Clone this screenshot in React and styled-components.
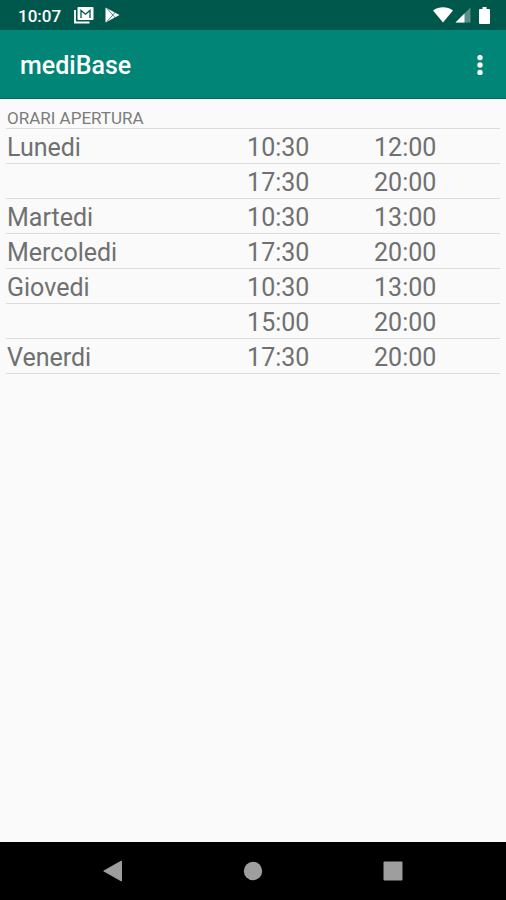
import React from "react";
import styled, { createGlobalStyle } from "styled-components";

const GlobalStyle = createGlobalStyle`
  * {
    box-sizing: border-box;
  }
  body {
    margin: 0;
    font-family: Roboto, "Noto Sans", sans-serif;
    background: #fafafa;
  }
`;

const Screen = styled.div`
  display: flex;
  flex-direction: column;
  min-height: 100vh;
`;
const StatusBar = styled.div`
  display: flex;
  align-items: center;
  justify-content: space-between;
  height: 30px;
  padding: 0 16px 0 18px;
  background: #00574b;
  color: #fff;
`;
const StatusGroup = styled.div`
  display: flex;
  align-items: center;
  gap: ${(props) => props.$gap};
`;
const Clock = styled.time`
  margin: 2px 2px 0 0;
  font-size: 17px;
  line-height: 30px;
  font-weight: 500;
`;
const BatterySlot = styled.div`
  display: flex;
  padding-left: 6px;
`;
const AppBar = styled.header`
  display: flex;
  align-items: center;
  justify-content: space-between;
  height: 69px;
  padding: 2px 11px 0 20px;
  background: #008577;
  color: #fff;
  border-bottom: 1px solid #00695e;
`;
const Title = styled.h1`
  margin: 2px 0 0;
  font-size: 25px;
  line-height: 32px;
  font-weight: 500;
`;
const IconButton = styled.button`
  display: flex;
  align-items: center;
  justify-content: center;
  width: ${(props) => props.$width};
  height: 40px;
  padding: 0;
  border: 0;
  background: none;
  color: inherit;
`;
const Content = styled.main`
  flex: 1;
  padding: 9px 6px;
`;
const Table = styled.table`
  width: 100%;
  table-layout: fixed;
  border-collapse: separate;
  border-spacing: 0;
  color: #707070;
`;
const Caption = styled.caption`
  height: 21px;
  padding-left: 1px;
  border-bottom: 1px solid #dcdcdc;
  font-size: 17px;
  line-height: 20px;
  text-align: left;
  color: #7c7c7c;
`;
const Column = styled.col`
  width: ${(props) => props.$width};
`;
const Day = styled.th`
  height: 35px;
  padding: 4px 0 0 1px;
  border-bottom: 1px solid #dcdcdc;
  font-size: 25px;
  line-height: 30px;
  font-weight: 400;
  text-align: left;
`;
const Hour = styled.td`
  height: 35px;
  padding: 4px 0 0 1px;
  border-bottom: 1px solid #dcdcdc;
  font-size: 25px;
  line-height: 30px;
`;
const NavBar = styled.nav`
  display: grid;
  grid-template-columns: repeat(3, 1fr);
  justify-items: center;
  align-items: center;
  height: 58px;
  padding: 0 43px;
  background: #000;
  color: #9e9e9e;
`;

const HOURS = [
  { day: "Lunedi", from: "10:30", to: "12:00" },
  { day: "", from: "17:30", to: "20:00" },
  { day: "Martedi", from: "10:30", to: "13:00" },
  { day: "Mercoledi", from: "17:30", to: "20:00" },
  { day: "Giovedi", from: "10:30", to: "13:00" },
  { day: "", from: "15:00", to: "20:00" },
  { day: "Venerdi", from: "17:30", to: "20:00" },
];

const MailIcon = () => (
  <svg width="20" height="18" viewBox="0 0 20 18" fill="none">
    <path d="M1 4v12.500h14.500" stroke="currentColor" strokeWidth="1.800" />
    <rect x="3.500" y="1" width="16" height="13" rx="1" fill="currentColor" />
    <path
      d="M7 12V4.500l4.500 3.700L16 4.500V12"
      stroke="#00574b"
      strokeWidth="1.300"
    />
  </svg>
);

const PlayIcon = () => (
  <svg width="15" height="16" viewBox="0 0 15 16" fill="none">
    <path d="M.5.500 14.500 8 .5 15.500z" fill="currentColor" />
    <path
      d="M2 1.500 10.500 11M2 14.500 10.500 5"
      stroke="#00574b"
      strokeWidth="0.700"
    />
  </svg>
);

const WifiIcon = () => (
  <svg width="20" height="16" viewBox="0 0 20 16">
    <path d="M0 3.500C6-.8 14-.8 20 3.500L10 15.500z" fill="currentColor" />
  </svg>
);

const SignalIcon = () => (
  <svg width="16" height="16" viewBox="0 0 16 16" fill="currentColor">
    <path d="M15.500.5v15H.5z" opacity="0.350" />
    <path d="M9.500 6.500v9H.5z" />
  </svg>
);

const BatteryIcon = () => (
  <svg width="11" height="17" viewBox="0 0 11 17" fill="currentColor">
    <path d="M3.500 0h4v2H10a1 1 0 0 1 1 1v13a1 1 0 0 1-1 1H1a1 1 0 0 1-1-1V3a1 1 0 0 1 1-1h2.500z" />
  </svg>
);

const MoreIcon = () => (
  <svg width="6" height="22" viewBox="0 0 6 22" fill="currentColor">
    <circle cx="3" cy="3.600" r="2.700" />
    <circle cx="3" cy="11" r="2.700" />
    <circle cx="3" cy="18.400" r="2.700" />
  </svg>
);

const BackIcon = () => (
  <svg width="20" height="22" viewBox="0 0 20 22" fill="currentColor">
    <path d="M18 .8q1-.5 1 .6v19.200q0 1.100-1 .6L.8 11.600q-.9-.6 0-1.200z" />
  </svg>
);

const HomeIcon = () => (
  <svg width="20" height="20" viewBox="0 0 20 20" fill="currentColor">
    <circle cx="10" cy="10" r="9.200" />
  </svg>
);

const RecentsIcon = () => (
  <svg width="20" height="20" viewBox="0 0 20 20" fill="currentColor">
    <rect x="0.500" y="0.500" width="19" height="19" rx="1" />
  </svg>
);

const App = () => {
  return (
    <Screen>
      <GlobalStyle />
      <StatusBar>
        <StatusGroup $gap="11px">
          <Clock>10:07</Clock>
          <MailIcon />
          <PlayIcon />
        </StatusGroup>
        <StatusGroup $gap="2px">
          <WifiIcon />
          <SignalIcon />
          <BatterySlot>
            <BatteryIcon />
          </BatterySlot>
        </StatusGroup>
      </StatusBar>
      <AppBar>
        <Title>mediBase</Title>
        <IconButton $width="30px" aria-label="Menu">
          <MoreIcon />
        </IconButton>
      </AppBar>
      <Content>
        <Table>
          <Caption>ORARI APERTURA</Caption>
          <colgroup>
            <Column $width="48.6%" />
            <Column $width="25.7%" />
            <Column $width="25.7%" />
          </colgroup>
          <tbody>
            {HOURS.map((h, i) => (
              <tr key={i}>
                <Day scope="row">{h.day}</Day>
                <Hour>{h.from}</Hour>
                <Hour>{h.to}</Hour>
              </tr>
            ))}
          </tbody>
        </Table>
      </Content>
      <NavBar>
        <IconButton $width="60px" aria-label="Indietro">
          <BackIcon />
        </IconButton>
        <IconButton $width="60px" aria-label="Home">
          <HomeIcon />
        </IconButton>
        <IconButton $width="60px" aria-label="Recenti">
          <RecentsIcon />
        </IconButton>
      </NavBar>
    </Screen>
  );
};

export default App;
